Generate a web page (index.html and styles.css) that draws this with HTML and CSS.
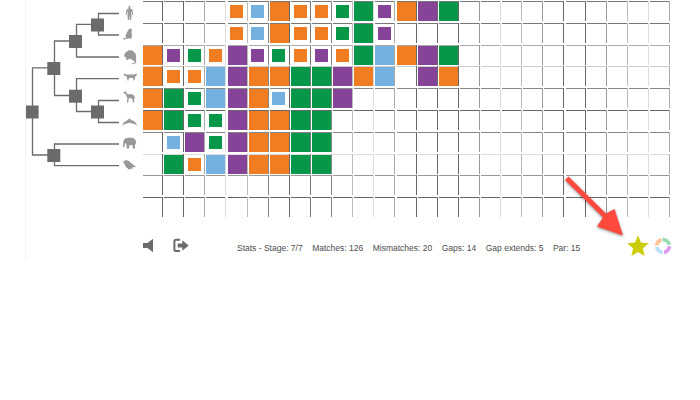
FILE: index.html
```
<!DOCTYPE html>
<html lang="en">
<head>
<meta charset="utf-8">
<title>Alignment puzzle</title>
<link rel="stylesheet" href="styles.css">
</head>
<body>
<main class="game">
  <div class="board">
    <svg class="tree" width="117" height="217" viewBox="26 0 117 217">
      <g class="branches">
        <path d="M119 13.5H98.5V35H119M98 24.3H76.5V57H119M76 41H54.5V95.5H76M119 78.7H76.5V111.5H98M119 100.5H98.5V122.5H119M54 67.8H32.5V155H54M119 144H54.5V165.7H119"/>
      </g>
      <g class="nodes">
        <rect x="91" y="18.5" width="13" height="13"/>
        <rect x="69" y="35" width="13" height="13"/>
        <rect x="47.3" y="62" width="13" height="13"/>
        <rect x="69" y="89.700" width="13" height="13"/>
        <rect x="91" y="105.500" width="13" height="13"/>
        <rect x="25.600" y="105.500" width="13" height="13"/>
        <rect x="47.3" y="149" width="13" height="13"/>
      </g>
      <g class="animals">
        <path d="M128.500 6h1.800v2.400l2 .8.600 3 .5 2.800-.8.2-1.300-4-.2 1.300.4 3-.4 4.500h-1.200l-.4-5-.4 5h-1.200l-.4-4.500.4-3-.2-1.300-1.300 4-.8-.2.5-2.800.6-3 2-.8z"/>
        <path d="M128.500 29.500l2-1 1.500 1-.5 2.500.5 3-.5 2.500.5 1h-4l-4 1.200-1-1 1-1.200.3.800 1.700.2-.500-3 1.500-3z"/>
        <path d="M124 56l1-3 3.500-2.700 4 .2 3 3 .8 4-.3 2.500.3 2-2 2.200-2.500-.2 0-.7 2 0 1-1.300-1.500-1.800-1.200 0-1.200-1.500-2 .2-1.500 1-1.500-.5.5-1.500z"/>
        <path d="M124 73.500l2.500 1h7.500l2.500-1 .5 1.500-1.700 1.500-.8 4h-1l-.5-2.500h-4l-.5 2.500h-1l-.8-4-2.700-1z"/>
        <path d="M123 93l2.500-2 2 3.200 5 0 1.800 1.500.8 3-.8-.5-.3 4.500h-.9l-.7-4-3.400-.7-1 4.700h-.9l.2-5-1.800-3.700z"/>
        <path d="M122 126l1.500-3.500 4.500-2.700 1.500-1.500 1.500 1.500 4 2 2.500 4-3-1.800-2.500-.5-2-.8-3 .8-2.500.500z"/>
        <path d="M123 147l.4-6 1.600-2.500 3-.8 5 0 2.700 2.500.5 4-.6 0-.4-1-.3 5.300h-2l-.5-3.500-3 .2-.5 3.300h-2l-.5-4-1.200-1.500-1 4z"/>
        <path d="M123 162l2-1.700 3 .3 3.500 2.700 3 2.500 1.500 1-1.500.5-2-.3.500 1.500-2 .2-3.500 1 .5-1.500-2-1-1.500-3.200z"/>
      </g>
    </svg>
    <div class="grid" id="grid"></div>
  </div>
  <footer class="toolbar">
    <svg class="sound" viewBox="0 0 12 16"><path d="M0 5h4.500L10 .8v13.400L4.500 10H0z"/></svg>
    <svg class="exit" viewBox="0 0 16 16"><path class="door" d="M7 1.800H3.200Q1.400 1.800 1.400 3.600v7.600Q1.400 13 3.200 13H7"/><path d="M4.700 5.500H9.300V2.300L15.700 7.500 9.300 12.800V9.600H4.700z"/></svg>
    <div class="stats"><span>Stats - Stage: 7/7</span><span>Matches: 126</span><span>Mismatches: 20</span><span>Gaps: 14</span><span>Gap extends: 5</span><span>Par: 15</span></div>
    <svg class="star" viewBox="0 0 22 22"><path d="M11 .3l3 7.200 7.800.7-5.900 5.100 1.700 7.800L11 17.100l-6.600 4 1.700-7.800L.2 8.200 8 7.500z"/></svg>
    <svg class="ring" viewBox="0 0 18 18">
      <path class="r1" d="M7.500 2.800A6.300 6.300 0 0 0 2.800 8.500"/>
      <path class="r2" d="M8.500 2.700A6.300 6.300 0 0 1 15.200 7.800"/>
      <path class="r3" d="M15.300 9.300A6.300 6.300 0 0 1 10 15.300"/>
      <path class="r4" d="M2.800 10A6.300 6.300 0 0 0 8.700 15.300"/>
    </svg>
  </footer>
  <svg class="pointer" viewBox="560 170 70 75"><path d="M568.500 176.500L606 213.500 614.500 209 623 235.500 597 226.500 603 217.500 565 180z"/></svg>
</main>
<script src="grid.js"></script>
</body>
</html>
```
FILE: styles.css
```
body { margin: 0; background: #fff; font-family: "Liberation Sans", Arial, sans-serif; }
.game { position: relative; width: 700px; height: 260px; box-sizing: border-box; padding-left: 25px; }
.game::before { content: ""; position: absolute; left: 25px; top: 0; width: 1px; height: 260px; background: #f2f2f2; }
.board { display: flex; height: 217px; }
.tree { flex: none; margin-left: 1px; overflow: visible; }
.branches { fill: none; stroke: #6b6b6b; stroke-width: 1.3; }
.nodes { fill: #6b6b6b; }
.animals { fill: #999; }
.grid { display: grid; grid-template-columns: repeat(25, 21.14px); grid-template-rows: repeat(10, 21.8px); padding-top: 1px; height: 218px; width: 530px; }
.cell { position: relative; display: flex; align-items: flex-start; width: 20px; height: 20px; }
.cell::before { content: ""; position: absolute; left: 0; top: 0; width: 19px; height: 1px; background: var(--row); }
.cell::after { content: ""; position: absolute; left: 19px; top: 0; width: 1px; height: 20px; background: var(--col); }
.tile { width: 13px; height: 13px; margin: 4px 0 0 2.700px; }
.tile.big { width: 19px; height: 19px; margin: 1px 0 0; }
.orange { background: #f17d23; }
.green { background: #069848; }
.purple { background: #864499; }
.blue { background: #73b1e1; }
.toolbar { display: flex; height: 43px; fill: #6b6b6b; }
.toolbar > * { flex: none; }
.sound { width: 12px; height: 16px; margin: 21px 0 0 118px; }
.exit { width: 16px; height: 16px; margin: 21px 0 0 18px; }
.door { fill: none; stroke: #6b6b6b; stroke-width: 2; }
.stats { display: flex; gap: 9.500px; margin: 25px 0 0 48px; width: 389.500px; font-size: 8.500px; line-height: 12px; color: #4d4d4d; white-space: nowrap; }
.star { width: 22px; height: 22px; margin-top: 18px; fill: #cccc08; }
.ring { width: 18px; height: 18px; margin: 20px 0 0 5px; fill: none; stroke-width: 3.800; }
.r1 { stroke: #fdc59b; }
.r2 { stroke: #99dcb0; }
.r3 { stroke: #dd9cef; }
.r4 { stroke: #b7e0fa; }
.pointer { position: absolute; left: 560px; top: 170px; width: 70px; height: 75px; fill: #ff493d; filter: drop-shadow(0 1px 1.5px rgba(0,0,0,.45)); }
```
FILE: grid.js
```
// Uppercase letters are full tiles, lowercase letters are small tiles.
const rows = [
  "....obOoogGpOPG",
  "....obOoogGp",
  "OpgoPpgopoGBOPG",
  "OooBPOOGGPOB.PO",
  "OGgBPObGGP",
  "OGggPOOGG",
  ".bPgPOOGG",
  ".GoBPOOGG",
  "",
  ""
];
const names = { o: "orange", g: "green", p: "purple", b: "blue" };
const rowShade = ["#777", "#777", "#aaa", "#ccc", "#888", "#666", "#888", "#ddd", "#999", "#666"];
const colShade = "66adb8678bda6669db9669bda";
const grid = document.getElementById("grid");
rows.forEach((row, r) => {
  for (let c = 0; c < 25; c++) {
    const cell = document.createElement("div");
    cell.className = "cell";
    cell.style.setProperty("--row", rowShade[r]);
    cell.style.setProperty("--col", "#" + colShade[c].repeat(3));
    const k = row[c];
    if (k && k !== ".") {
      const tile = document.createElement("i");
      tile.className = "tile " + names[k.toLowerCase()] + (k < "a" ? " big" : "");
      cell.append(tile);
    }
    grid.append(cell);
  }
});
```
